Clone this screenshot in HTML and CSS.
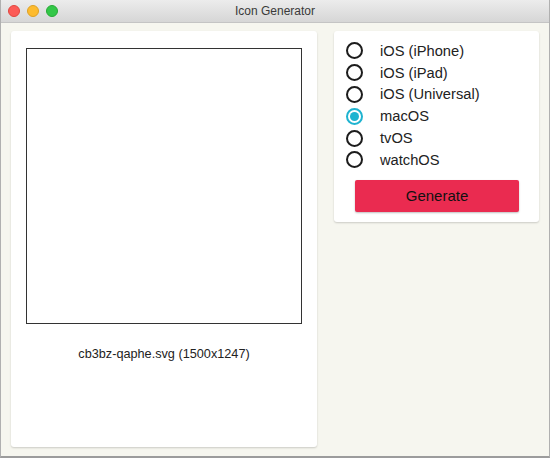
FILE: index.html
```html
<!DOCTYPE html>
<html>
<head>
<meta charset="utf-8">
<link rel="stylesheet" href="styles.css">
</head>
<body>
<div class="window">
  <div class="titlebar">
    <div class="lights">
      <span class="light red"></span>
      <span class="light yellow"></span>
      <span class="light green"></span>
    </div>
    <div class="title">Icon Generator</div>
  </div>
  <div class="content">
    <div class="card preview">
      <div class="imgbox"></div>
      <div class="caption">cb3bz-qaphe.svg (1500x1247)</div>
    </div>
    <div class="card options">
      <div class="radios">
        <label class="radio"><span class="dot"></span><span class="lbl">iOS (iPhone)</span></label>
        <label class="radio"><span class="dot"></span><span class="lbl">iOS (iPad)</span></label>
        <label class="radio"><span class="dot"></span><span class="lbl">iOS (Universal)</span></label>
        <label class="radio checked"><span class="dot"></span><span class="lbl">macOS</span></label>
        <label class="radio"><span class="dot"></span><span class="lbl">tvOS</span></label>
        <label class="radio"><span class="dot"></span><span class="lbl">watchOS</span></label>
      </div>
      <button class="generate">Generate</button>
    </div>
  </div>
</div>
</body>
</html>
```
FILE: styles.css
```css
html, body {
  margin: 0;
  padding: 0;
}
body {
  width: 550px;
  height: 458px;
  overflow: hidden;
  font-family: "Liberation Sans", Arial, sans-serif;
  background: #f6f6ef;
}
.window {
  width: 550px;
  height: 458px;
  box-sizing: border-box;
  border-left: 1px solid #b0b0b0;
  border-right: 1px solid #b0b0b0;
  border-bottom: 2px solid #9c9c9c;
  display: flex;
  flex-direction: column;
  background: #f6f6ef;
}
.titlebar {
  height: 22px;
  flex: none;
  background: linear-gradient(#ececec, #d6d6d6);
  border-bottom: 1px solid #c4c4c4;
  position: relative;
  display: flex;
  align-items: center;
  justify-content: center;
}
.lights {
  position: absolute;
  left: 7px;
  top: 5px;
  display: flex;
  gap: 7px;
}
.light {
  width: 12px;
  height: 12px;
  border-radius: 50%;
  box-sizing: border-box;
}
.red { background: #fc5b57; border: 1px solid #e1463f; }
.yellow { background: #fdbb2e; border: 1px solid #dea123; }
.green { background: #33c748; border: 1px solid #27aa35; }
.title {
  font-size: 12px;
  color: #3a3a3a;
  line-height: 22px;
}
.content {
  flex: 1;
  display: grid;
  grid-template-columns: 306px 205px;
  column-gap: 17px;
  align-items: start;
  padding: 8px 10px 0 10px;
}
.card {
  background: #ffffff;
  border-radius: 3px;
  box-shadow: 0 1px 2px rgba(0,0,0,0.18);
  box-sizing: border-box;
}
.preview {
  height: 416px;
  padding: 17px 15px;
}
.imgbox {
  width: 276px;
  height: 276px;
  box-sizing: border-box;
  border: 1px solid #333;
}
.caption {
  margin-top: 22px;
  text-align: center;
  font-size: 12.7px;
  line-height: 16px;
  color: #222;
}
.options {
  height: 191px;
  padding: 9px 0 0 12px;
}
.radios {
  display: flex;
  flex-direction: column;
}
.radio {
  height: 21.8px;
  display: flex;
  align-items: center;
}
.dot {
  width: 17px;
  height: 17px;
  box-sizing: border-box;
  border: 2px solid #1c1c1c;
  border-radius: 50%;
  flex: none;
  display: flex;
  align-items: center;
  justify-content: center;
}
.checked .dot {
  border-color: #1eb3d0;
}
.checked .dot::after {
  content: "";
  width: 9px;
  height: 9px;
  border-radius: 50%;
  background: #1eb3d0;
}
.lbl {
  margin-left: 17px;
  font-size: 14.7px;
  color: #222;
}
.generate {
  display: block;
  margin: 9px 0 0 9px;
  width: 164px;
  height: 32px;
  border: none;
  border-radius: 2px;
  background: #ea2b50;
  color: #111;
  font-family: "Liberation Sans", Arial, sans-serif;
  font-size: 15px;
  box-shadow: 0 1px 2px rgba(0,0,0,0.25);
  padding: 0;
}
```
